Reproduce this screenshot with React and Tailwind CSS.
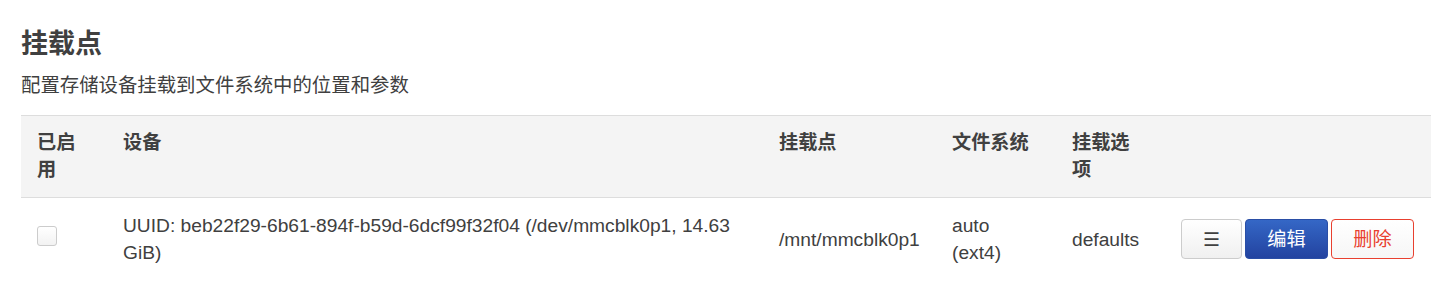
export default function App() {
    return (
        <div className="bg-white min-h-screen pl-[21px] pr-[24px] pt-[24px] text-[#404040] font-['Liberation_Sans','Noto_Sans_CJK_SC',sans-serif]">
            {/* Title */}
            <h2 className="text-[27px] font-bold leading-[40px] text-[#404040]">挂载点</h2>
            <p className="mt-[8px] text-[19.4px] leading-[27px]">配置存储设备挂载到文件系统中的位置和参数</p>

            {/* Mount table */}
            <table className="mt-[16px] w-[1410px] table-fixed border-collapse text-[19.2px] leading-[27.4px]">
                <colgroup>
                    <col className="w-[86px]" />
                    <col className="w-[656px]" />
                    <col className="w-[173px]" />
                    <col className="w-[120px]" />
                    <col className="w-[109px]" />
                    <col className="w-[266px]" />
                </colgroup>
                <thead>
                    <tr className="bg-[#f4f4f4] border-t border-b border-[#dddddd] text-left align-top">
                        <th className="px-4 py-[13px] font-bold">已启用</th>
                        <th className="px-4 py-[13px] font-bold">设备</th>
                        <th className="px-4 py-[13px] font-bold">挂载点</th>
                        <th className="px-4 py-[13px] font-bold">文件系统</th>
                        <th className="pl-4 pr-6 py-[13px] font-bold">挂载选项</th>
                        <th className="px-4 py-[13px]"></th>
                    </tr>
                </thead>
                <tbody>
                    <tr className="align-middle">
                        <td className="px-4 py-[14px]">
                            <div className="w-[20px] h-[20px] -mt-[6px] rounded-[3px] border border-[#cccccc] bg-gradient-to-b from-white to-[#f2f2f2]"></div>
                        </td>
                        <td className="px-4 py-[14px]">UUID: beb22f29-6b61-894f-b59d-6dcf99f32f04 (/dev/mmcblk0p1, 14.63 GiB)</td>
                        <td className="px-4 py-[14px]">/mnt/mmcblk0p1</td>
                        <td className="px-4 py-[14px]">auto (ext4)</td>
                        <td className="px-4 py-[14px]">defaults</td>
                        <td className="px-4 py-[14px]">
                            <div className="flex gap-[3px]">
                                <button className="w-[61px] h-[40px] rounded-[4px] border border-[#cccccc] bg-gradient-to-b from-white to-[#f0f0f0] text-[#404040] text-[19px] leading-none">☰</button>
                                <button className="w-[83px] h-[40px] rounded-[4px] border border-[#2a4ea6] bg-gradient-to-b from-[#3567c6] to-[#2343a0] text-white text-[19.2px]">编辑</button>
                                <button className="w-[83px] h-[40px] rounded-[4px] border border-[#e8402f] bg-gradient-to-b from-white to-[#f6f6f6] text-[#e8402f] text-[19.2px]">删除</button>
                            </div>
                        </td>
                    </tr>
                </tbody>
            </table>
        </div>
    );
}
